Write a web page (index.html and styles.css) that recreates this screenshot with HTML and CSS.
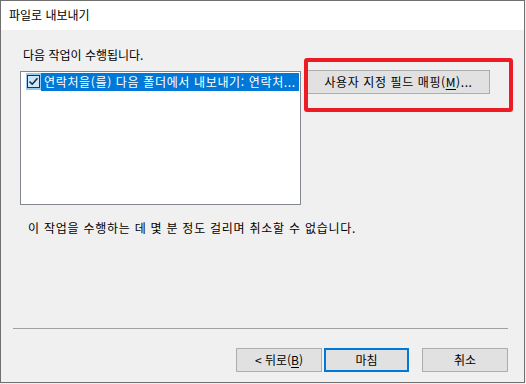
FILE: index.html
```html
<!DOCTYPE html>
<html lang="ko">
<head>
<meta charset="utf-8">
<title>파일로 내보내기</title>
<link rel="stylesheet" href="styles.css">
</head>
<body>
<div class="window">
  <div class="titlebar">파일로 내보내기</div>
  <div class="content">
    <div class="label">다음 작업이 수행됩니다.</div>
    <div class="row">
      <div class="listbox">
        <div class="item">
          <span class="check-wrap">
            <span class="check">
              <svg width="11" height="11" viewBox="0 0 11 11"><path d="M1.5 5.5 L4.2 8.2 L9.5 2.2" fill="none" stroke="#1a2a3a" stroke-width="1.6"/></svg>
            </span>
          </span>
          <span class="item-text">연락처을(를) 다음 폴더에서 내보내기: 연락처...</span>
        </div>
      </div>
      <div class="side">
        <button class="btn map-btn">사용자 지정 필드 매핑(<u>M</u>)...</button>
        <div class="highlight"></div>
      </div>
    </div>
    <div class="info">이 작업을 수행하는 데 몇 분 정도 걸리며 취소할 수 없습니다.</div>
  </div>
  <div class="footer">
    <div class="separator"></div>
    <div class="buttons">
      <button class="btn back">&lt; 뒤로(<u>B</u>)</button>
      <button class="btn finish">마침</button>
      <button class="btn cancel">취소</button>
    </div>
  </div>
</div>
</body>
</html>
```
FILE: styles.css
```css
* { box-sizing: border-box; }
html, body { margin: 0; padding: 0; }
body {
  width: 526px;
  height: 384px;
  background: #f0f0f0;
  font-family: "Noto Sans CJK KR", "Noto Sans", sans-serif;
  font-size: 12px;
  color: #000;
  overflow: hidden;
}
.window {
  width: 525px;
  height: 383px;
  border: 1px solid #6f6f6f;
  background: #f0f0f0;
  display: flex;
  flex-direction: column;
}
.titlebar {
  height: 29px;
  background: #fff;
  padding-left: 8px;
  line-height: 28px;
  flex: none;
}
.content {
  padding: 17px 0 0 19px;
  flex: none;
}
.label {
  padding-left: 3px;
  line-height: 16px;
  height: 16px;
}
.row {
  display: flex;
  align-items: flex-start;
  margin-top: 8px;
}
.listbox {
  width: 281px;
  height: 134px;
  background: #fff;
  border: 1px solid #828790;
  padding: 1px 1px 0 5px;
}
.item {
  display: flex;
  align-items: stretch;
  height: 18px;
}
.check-wrap {
  width: 15px;
  height: 17px;
  background: #99c9ef;
  display: flex;
  align-items: center;
  justify-content: center;
  flex: none;
}
.check {
  width: 13px;
  height: 13px;
  border: 1px solid #1f3347;
  background: #cde6f8;
  display: flex;
  align-items: center;
  justify-content: center;
}
.check svg { display: block; }
.item-text {
  flex: 1;
  background: #0078d7;
  color: #fff;
  line-height: 18px;
  padding-left: 3px;
  white-space: nowrap;
  overflow: hidden;
  letter-spacing: 0.65px;
}
.side {
  position: relative;
  margin-left: 6px;
  margin-top: -1px;
}
.btn {
  font-family: inherit;
  font-size: 12px;
  color: #000;
  background: #e1e1e1;
  border: 1px solid #adadad;
  height: 24px;
  padding: 0;
  margin: 0;
  line-height: 20px;
}
.btn u { text-decoration: underline; text-underline-offset: 2px; }
.map-btn {
  width: 183px;
  display: block;
  letter-spacing: 0.6px;
}
.highlight {
  position: absolute;
  left: -3px;
  top: -12px;
  width: 209px;
  height: 54px;
  border: 4px solid #ed1c24;
  border-radius: 3px;
}
.info {
  margin-top: 15px;
  padding-left: 8px;
  line-height: 16px;
  letter-spacing: 0.75px;
}
.footer {
  margin-top: auto;
  padding: 0 16px 10px 12px;
}
.separator {
  height: 1px;
  background: #a0a0a0;
}
.buttons {
  display: flex;
  justify-content: flex-end;
  margin-top: 19px;
}
.back { width: 86px; }
.finish {
  width: 85px;
  margin-left: 2px;
  border: 2px solid #0078d7;
}
.cancel { width: 86px; margin-left: 13px; }
```
